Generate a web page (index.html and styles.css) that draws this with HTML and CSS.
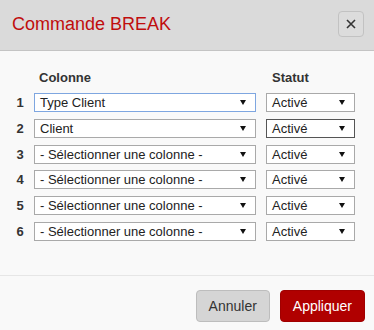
FILE: index.html
```html
<!DOCTYPE html>
<html lang="fr">
<head>
    <meta charset="UTF-8">
    <meta name="viewport" content="width=device-width, initial-scale=1.0">
    <title>Commande BREAK</title>
    <link rel="stylesheet" href="styles.css">
</head>
<body>
    <div class="dialog">
        <div class="dialog-header">
            <h2 class="dialog-title">Commande BREAK</h2>
            <button class="btn-close" type="button" aria-label="Fermer">
                <svg width="10" height="10" viewBox="0 0 10 10">
                    <path d="M1 1 L9 9 M9 1 L1 9" stroke="#333" stroke-width="1.6" fill="none"/>
                </svg>
            </button>
        </div>

        <div class="dialog-body">
            <div class="ligne entete">
                <span class="num"></span>
                <span class="col-colonne">Colonne</span>
                <span class="col-statut">Statut</span>
            </div>

            <div class="ligne">
                <span class="num">1</span>
                <div class="choix colonne focus"><span>Type Client</span><i class="fleche"></i></div>
                <div class="choix statut"><span>Activé</span><i class="fleche"></i></div>
            </div>
            <div class="ligne">
                <span class="num">2</span>
                <div class="choix colonne"><span>Client</span><i class="fleche"></i></div>
                <div class="choix statut actif"><span>Activé</span><i class="fleche"></i></div>
            </div>
            <div class="ligne">
                <span class="num">3</span>
                <div class="choix colonne"><span>- Sélectionner une colonne -</span><i class="fleche"></i></div>
                <div class="choix statut"><span>Activé</span><i class="fleche"></i></div>
            </div>
            <div class="ligne">
                <span class="num">4</span>
                <div class="choix colonne"><span>- Sélectionner une colonne -</span><i class="fleche"></i></div>
                <div class="choix statut"><span>Activé</span><i class="fleche"></i></div>
            </div>
            <div class="ligne">
                <span class="num">5</span>
                <div class="choix colonne"><span>- Sélectionner une colonne -</span><i class="fleche"></i></div>
                <div class="choix statut"><span>Activé</span><i class="fleche"></i></div>
            </div>
            <div class="ligne">
                <span class="num">6</span>
                <div class="choix colonne"><span>- Sélectionner une colonne -</span><i class="fleche"></i></div>
                <div class="choix statut"><span>Activé</span><i class="fleche"></i></div>
            </div>
        </div>

        <div class="dialog-footer">
            <button type="button" class="btn btn-annuler">Annuler</button>
            <button type="button" class="btn btn-appliquer">Appliquer</button>
        </div>
    </div>
</body>
</html>
```

FILE: styles.css
```css
:root {
    --rouge: #c00d0d;
    --rouge-fonce: #b00000;
    --texte: #333333;
    --fond: #f9f9f9;
    --entete: #dadada;
}
body {
    margin: 0;
    padding: 0;
    font-family: 'Liberation Sans', Arial, sans-serif;
    color: var(--texte);
    background-color: var(--fond);
}
.dialog {
    width: 374px;
    height: 330px;
    background-color: var(--fond);
    display: flex;
    flex-direction: column;
}
.dialog-header {
    height: 48px;
    padding: 0 10px 2px 12px;
    background-color: var(--entete);
    border-bottom: 1px solid #c4c4c4;
    display: flex;
    align-items: center;
    justify-content: space-between;
    flex-shrink: 0;
}
.dialog-title {
    margin: 0;
    font-size: 18px;
    font-weight: normal;
    color: var(--rouge);
}
.btn-close {
    width: 26px;
    height: 26px;
    padding: 0;
    border: 1px solid #c2c2c2;
    border-radius: 4px;
    background-color: #dcdcdc;
    display: flex;
    align-items: center;
    justify-content: center;
    cursor: pointer;
}
.dialog-body {
    padding: 19px 0 0 10px;
    height: 205px;
    border-bottom: 1px solid #e6e6e6;
    flex-shrink: 0;
}
.ligne {
    display: flex;
    align-items: center;
    height: 19px;
    margin-bottom: 6.8px;
}
.ligne.entete {
    height: 16px;
    margin-bottom: 7px;
    font-size: 13px;
    font-weight: bold;
    line-height: 16px;
}
.num {
    width: 20px;
    margin-right: 4px;
    text-align: center;
    font-size: 13px;
    font-weight: bold;
}
.col-colonne {
    width: 222px;
    padding-left: 5px;
    box-sizing: border-box;
}
.col-statut {
    margin-left: 10px;
    padding-left: 6px;
}
.choix {
    height: 19px;
    box-sizing: border-box;
    border: 1px solid #a9a9a9;
    background-color: #ffffff;
    font-size: 13px;
    color: #222;
    padding: 0 9px 0 5px;
    display: flex;
    align-items: center;
    justify-content: space-between;
    white-space: nowrap;
}
.choix.colonne {
    width: 222px;
}
.choix.statut {
    width: 89px;
    margin-left: 10px;
}
.choix.focus {
    border-color: #7ea6e0;
}
.choix.actif {
    border-color: #555555;
}
.fleche {
    width: 0;
    height: 0;
    border-left: 3px solid transparent;
    border-right: 3px solid transparent;
    border-top: 5px solid #111;
}
.dialog-footer {
    padding: 14px 9px 0 0;
    display: flex;
    justify-content: flex-end;
    gap: 10px;
}
.btn {
    height: 32px;
    padding: 0 12px;
    border-radius: 4px;
    font-family: inherit;
    font-size: 14px;
    cursor: pointer;
}
.btn-annuler {
    background-color: #d5d5d5;
    border: 1px solid #bdbdbd;
    color: var(--texte);
}
.btn-appliquer {
    background-color: var(--rouge-fonce);
    border: 1px solid #a00000;
    color: #ffffff;
}
```
